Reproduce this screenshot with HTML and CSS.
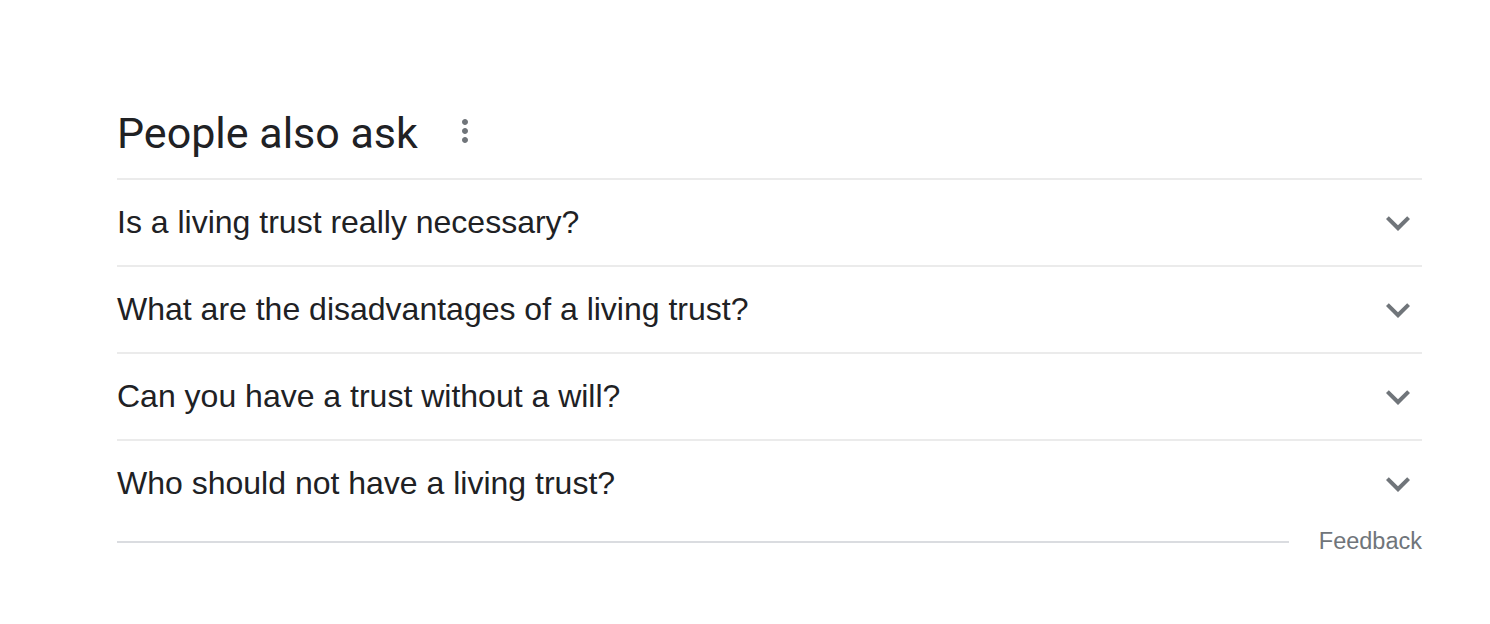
FILE: index.html
```html
<!DOCTYPE html>
<html lang="en">
<head>
<meta charset="utf-8">
<title>People also ask</title>
<link rel="stylesheet" href="styles.css">
</head>
<body>
<div class="paa">
  <div class="paa-head">
    <h2 class="paa-title">People also ask</h2>
    <svg class="more" viewBox="0 0 24 24" width="36" height="36" aria-hidden="true"><path d="M12 8c1.1 0 2-.9 2-2s-.9-2-2-2-2 .9-2 2 .9 2 2 2zm0 2c-1.1 0-2 .9-2 2s.9 2 2 2 2-.9 2-2-.9-2-2-2zm0 6c-1.1 0-2 .9-2 2s.9 2 2 2 2-.9 2-2-.9-2-2-2z"/></svg>
  </div>
  <div class="q-row"><span class="q-text">Is a living trust really necessary?</span><svg class="chev" viewBox="0 0 24 24" width="48" height="48" aria-hidden="true"><path d="M16.59 8.59L12 13.17 7.41 8.59 6 10l6 6 6-6z"/></svg></div>
  <div class="q-row"><span class="q-text">What are the disadvantages of a living trust?</span><svg class="chev" viewBox="0 0 24 24" width="48" height="48" aria-hidden="true"><path d="M16.59 8.59L12 13.17 7.41 8.59 6 10l6 6 6-6z"/></svg></div>
  <div class="q-row"><span class="q-text">Can you have a trust without a will?</span><svg class="chev" viewBox="0 0 24 24" width="48" height="48" aria-hidden="true"><path d="M16.59 8.59L12 13.17 7.41 8.59 6 10l6 6 6-6z"/></svg></div>
  <div class="q-row last"><span class="q-text">Who should not have a living trust?</span><svg class="chev" viewBox="0 0 24 24" width="48" height="48" aria-hidden="true"><path d="M16.59 8.59L12 13.17 7.41 8.59 6 10l6 6 6-6z"/></svg></div>
  <div class="paa-foot">
    <div class="foot-line"></div>
    <span class="feedback">Feedback</span>
  </div>
</div>
</body>
</html>
```

FILE: styles.css
```css
html, body {
  margin: 0;
  padding: 0;
  background: #ffffff;
}

.paa {
  width: 1305px;
  margin: 107px 0 0 117px;
  font-family: "Liberation Sans", Arial, sans-serif;
  color: #202124;
}

.paa-head {
  display: flex;
  align-items: center;
  padding-bottom: 19px;
  border-bottom: 2px solid #ebebeb;
}

.paa-title {
  margin: 0;
  font-family: Roboto, "Open Sans", sans-serif;
  font-weight: 400;
  font-size: 43px;
  line-height: 52px;
  color: #202124;
}

.more {
  fill: #70757a;
  margin-left: 29px;
  margin-bottom: 4px;
  flex: none;
}

.q-row {
  display: flex;
  align-items: center;
  justify-content: space-between;
  height: 85px;
  border-bottom: 2px solid #ebebeb;
}

.q-row.last {
  border-bottom: none;
}

.q-text {
  font-size: 32px;
  line-height: 40px;
  color: #202124;
  position: relative;
  top: -1px;
}

.chev {
  fill: #70757a;
  flex: none;
}

.paa-foot {
  display: flex;
  align-items: center;
  height: 29px;
  margin-top: 1px;
}

.foot-line {
  flex: 1;
  height: 2px;
  background: #dadce0;
  margin-right: 30px;
}

.feedback {
  font-size: 23.5px;
  line-height: 29px;
  color: #70757a;
}
```
